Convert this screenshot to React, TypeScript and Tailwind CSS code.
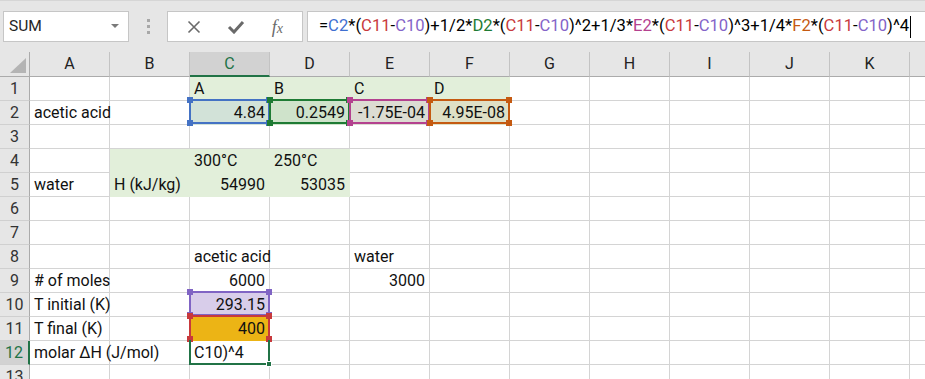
import React from "react";
import clsx from "clsx";

const cols = ["A", "B", "C", "D", "E", "F", "G", "H", "I", "J", "K", "L"];

type CellData = { v: string; right?: boolean };

const cells: Record<string, CellData> = {
  C1: { v: "A" },
  D1: { v: "B" },
  E1: { v: "C" },
  F1: { v: "D" },
  A2: { v: "acetic acid" },
  C2: { v: "4.84", right: true },
  D2: { v: "0.2549", right: true },
  E2: { v: "-1.75E-04", right: true },
  F2: { v: "4.95E-08", right: true },
  C4: { v: "300°C" },
  D4: { v: "250°C" },
  A5: { v: "water" },
  B5: { v: "H (kJ/kg)" },
  C5: { v: "54990", right: true },
  D5: { v: "53035", right: true },
  C8: { v: "acetic acid" },
  E8: { v: "water" },
  A9: { v: "# of moles" },
  C9: { v: "6000", right: true },
  E9: { v: "3000", right: true },
  A10: { v: "T initial (K)" },
  C10: { v: "293.15", right: true },
  A11: { v: "T final (K)" },
  C11: { v: "400", right: true },
  A12: { v: "molar ΔH (J/mol)" },
  C12: { v: "C10)^4" },
};

// fill colour + matching border so gridlines disappear under fills
const fills: Record<string, string> = {
  C1: "bg-[#e2efda] border-[#e2efda]",
  D1: "bg-[#e2efda] border-[#e2efda]",
  E1: "bg-[#e2efda] border-[#e2efda]",
  F1: "bg-[#e2efda] border-[#e2efda]",
  C2: "bg-[#d2e2d8] border-[#d2e2d8]",
  D2: "bg-[#cfe3cb] border-[#cfe3cb]",
  E2: "bg-[#dcdcd2] border-[#dcdcd2]",
  F2: "bg-[#dfe0c6] border-[#dfe0c6]",
  B4: "bg-[#e2efda] border-[#e2efda]",
  C4: "bg-[#e2efda] border-[#e2efda]",
  D4: "bg-[#e2efda] border-[#e2efda]",
  B5: "bg-[#e2efda] border-[#e2efda]",
  C5: "bg-[#e2efda] border-[#e2efda]",
  D5: "bg-[#e2efda] border-[#e2efda]",
  C10: "bg-[#d8cdea] border-[#d8cdea]",
  C11: "bg-[#ecb415] border-[#ecb415]",
};

// coloured range outlines drawn over the grid
const ranges: Record<string, { box: string; dot: string }> = {
  C2: { box: "border-[#4472c4]", dot: "bg-[#4472c4]" },
  D2: { box: "border-[#1e7b34]", dot: "bg-[#1e7b34]" },
  E2: { box: "border-[#b4428f]", dot: "bg-[#b4428f]" },
  F2: { box: "border-[#c55a11]", dot: "bg-[#c55a11]" },
  C10: { box: "border-[#8064c4]", dot: "bg-[#8064c4]" },
  C11: { box: "border-[#c8393c] border-b-transparent", dot: "bg-[#c8393c]" },
};

const Handles = ({ dot }: { dot: string }) => (
  <>
    <span className={clsx("absolute -left-[4px] -top-[4px] w-[6px] h-[6px]", dot)} />
    <span className={clsx("absolute -right-[4px] -top-[4px] w-[6px] h-[6px]", dot)} />
    <span className={clsx("absolute -left-[4px] -bottom-[4px] w-[6px] h-[6px]", dot)} />
    <span className={clsx("absolute -right-[4px] -bottom-[4px] w-[6px] h-[6px]", dot)} />
  </>
);

const formula: [string, string][] = [
  ["=", "text-black"],
  ["C2", "text-[#3f6fd0]"],
  ["*(", "text-black"],
  ["C11", "text-[#c8393c]"],
  ["-", "text-black"],
  ["C10", "text-[#8464c8]"],
  [")+1/2*", "text-black"],
  ["D2", "text-[#1e7b34]"],
  ["*(", "text-black"],
  ["C11", "text-[#c8393c]"],
  ["-", "text-black"],
  ["C10", "text-[#8464c8]"],
  [")^2+1/3*", "text-black"],
  ["E2", "text-[#b4428f]"],
  ["*(", "text-black"],
  ["C11", "text-[#c8393c]"],
  ["-", "text-black"],
  ["C10", "text-[#8464c8]"],
  [")^3+1/4*", "text-black"],
  ["F2", "text-[#c55a11]"],
  ["*(", "text-black"],
  ["C11", "text-[#c8393c]"],
  ["-", "text-black"],
  ["C10", "text-[#8464c8]"],
  [")^4", "text-black"],
];

function Toolbar() {
  return (
    <div className="h-[52px] bg-[#e6e6e6] border-t border-[#d6d6d6] flex items-start pt-[10px]">
      {/* name box */}
      <div className="ml-[3px] w-[126px] h-[31px] bg-white border border-[#c6c6c6] flex items-center justify-between pl-[5px] pr-[9px]">
        <span className="text-[15.5px] text-[#262626]">SUM</span>
        <svg width="8" height="5" viewBox="0 0 8 5">
          <polygon points="0,0 8,0 4,4" fill="#7a7a7a" />
        </svg>
      </div>
      {/* grip */}
      <div className="w-[38px] h-[31px] flex flex-col items-center justify-center gap-[3px]">
        <span className="w-[3px] h-[3px] bg-[#a8a8a8]" />
        <span className="w-[3px] h-[3px] bg-[#a8a8a8]" />
        <span className="w-[3px] h-[3px] bg-[#a8a8a8]" />
      </div>
      {/* cancel / enter / fx */}
      <div className="w-[136px] h-[31px] bg-white border border-[#c6c6c6] flex items-center justify-around px-[6px]">
        <svg width="14" height="14" viewBox="0 0 14 14">
          <path d="M1.5 1.5 L12.5 12.5 M12.5 1.5 L1.5 12.5" stroke="#6a6a6a" strokeWidth="1.6" />
        </svg>
        <svg width="18" height="14" viewBox="0 0 18 14">
          <path d="M2 7 L7 12 L16 2" stroke="#6a6a6a" strokeWidth="3" fill="none" />
        </svg>
        <span className="font-['Liberation_Serif'] italic text-[18px] text-[#6a6a6a] leading-none">
          f<span className="text-[14px]">x</span>
        </span>
      </div>
      {/* formula */}
      <div className="ml-[4px] flex-1 h-[31px] bg-white border border-[#c6c6c6] border-r-0 flex items-center pl-[11px] whitespace-nowrap text-[16.6px]">
        {formula.map(([t, c], i) => (
          <span key={i} className={c}>
            {t}
          </span>
        ))}
        <span className="ml-[1px] w-[1px] h-[22px] bg-black" />
      </div>
    </div>
  );
}

function HeaderRow() {
  return (
    <div className="flex h-[25px] bg-[#e6e6e6]">
      <div className="w-[30px] shrink-0 h-[25px] border-r border-b border-[#ababab] relative">
        <svg className="absolute left-[10px] top-[6px]" width="16" height="15" viewBox="0 0 16 15">
          <polygon points="16,0 16,15 0,15" fill="#b4b4b4" />
        </svg>
      </div>
      {cols.map((c) => (
        <div
          key={c}
          className={clsx(
            "w-[80px] shrink-0 h-[25px] border-r border-[#c3c3c3] flex items-center justify-center text-[16px]",
            c === "C" ? "bg-[#d2d2d2] border-b-2 border-b-[#217346] text-[#217346]" : "border-b border-b-[#ababab] text-[#222]"
          )}
        >
          {c}
        </div>
      ))}
    </div>
  );
}

function Row({ n }: { n: number }) {
  const active = n === 12;
  return (
    <div className="flex h-[24px]">
      <div
        className={clsx(
          "w-[30px] shrink-0 h-[24px] border-b border-[#d0d0d0] flex items-center justify-center text-[16px]",
          active ? "bg-[#d2d2d2] text-[#217346] border-r-2 border-r-[#217346]" : "bg-[#e6e6e6] text-[#333] border-r border-r-[#ababab]"
        )}
      >
        {n}
      </div>
      {cols.map((c) => {
        const id = `${c}${n}`;
        const cell = cells[id];
        const range = ranges[id];
        return (
          <div
            key={id}
            className={clsx(
              "relative w-[80px] shrink-0 h-[24px] border-r border-b px-[4px] leading-[23px] whitespace-nowrap text-[16px] text-[#111] flex",
              fills[id] ?? "border-[#d4d4d4]",
              cell?.right ? "justify-end" : "justify-start"
            )}
          >
            {cell && <span>{cell.v}</span>}
            {range && (
              <div className={clsx("absolute -left-[1px] -top-[2px] right-[-1px] bottom-0 border-2 z-10", range.box)}>
                <Handles dot={range.dot} />
              </div>
            )}
            {id === "C12" && (
              <div className="absolute -left-[1px] -top-[1px] right-[-1px] bottom-[-1px] border-2 border-t-0 border-[#217346] z-10">
                <span className="absolute -right-[4px] -bottom-[4px] w-[6px] h-[6px] bg-[#217346] border border-white" />
              </div>
            )}
          </div>
        );
      })}
    </div>
  );
}

export default function App() {
  return (
    <div className="w-[925px] h-[379px] overflow-hidden bg-white font-['Roboto',sans-serif]">
      <Toolbar />
      <HeaderRow />
      {Array.from({ length: 13 }, (_, i) => (
        <Row key={i} n={i + 1} />
      ))}
    </div>
  );
}
